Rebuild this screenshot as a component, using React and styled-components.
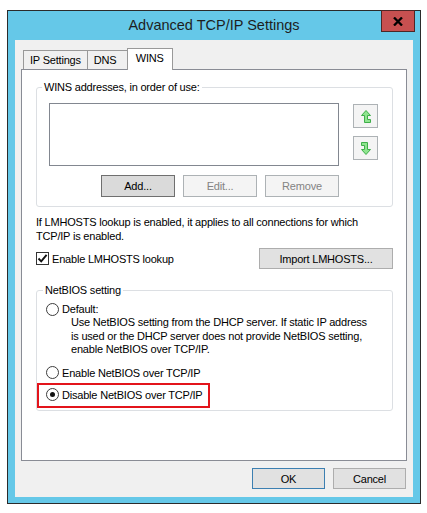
import React from 'react';
import styled, { createGlobalStyle, css } from 'styled-components';

const GlobalStyle = createGlobalStyle`
  html, body {
    margin: 0;
    padding: 0;
    background: #fff;
  }
  body {
    font: 11px 'Liberation Sans', Arial, sans-serif;
    letter-spacing: -0.2px;
    color: #000;
  }
`;

const Page = styled.div`
  padding: 10px 0 0 7px;
`;

const Window = styled.div`
  box-sizing: border-box;
  width: 414px;
  height: 494px;
  border: 1px solid #2b2b2b;
  background: #65c8e8;
  display: flex;
  flex-direction: column;
`;

const TitleBar = styled.div`
  height: 29px;
  flex: none;
  display: grid;
  grid-template-columns: 1fr auto 1fr;
  align-items: start;
`;

const Title = styled.div`
  grid-column: 2;
  font-size: 14.5px;
  letter-spacing: 0;
  line-height: 29px;
  color: #1e1e1e;
  white-space: nowrap;
`;

const CloseButton = styled.div`
  grid-column: 3;
  justify-self: end;
  box-sizing: border-box;
  width: 34px;
  height: 22px;
  margin: -1px 5px 0 0;
  background: #c75050;
  border: 1px solid #4d2626;
  display: flex;
  align-items: center;
  justify-content: center;
`;

const Client = styled.div`
  flex: 1;
  box-sizing: border-box;
  margin: 0 7px 6px;
  padding: 8px 6px;
  background: #f0f0f0;
  display: flex;
  flex-direction: column;
`;

const TabStrip = styled.div`
  display: flex;
  align-items: flex-end;
  height: 22px;
  padding-left: 2px;
  margin-bottom: -1px;
  position: relative;
  z-index: 1;
`;

const Tab = styled.div`
  box-sizing: border-box;
  min-width: ${(p) => (p.$active ? 46 : 41)}px;
  height: ${(p) => (p.$active ? 22 : 19)}px;
  margin: 0 0 ${(p) => (p.$active ? 0 : 1)}px -1px;
  padding: 0 ${(p) => (p.$active ? 8 : 6)}px ${(p) => (p.$active ? 3 : 0)}px;
  line-height: 18px;
  border: 1px solid #999;
  border-bottom: none;
  background: ${(p) => (p.$active ? '#fff' : '#f0f0f0')};
  white-space: nowrap;

  &:first-child {
    margin-left: 0;
  }
`;

const Panel = styled.div`
  flex: 1;
  box-sizing: border-box;
  background: #fff;
  border: 1px solid #898c95;
  padding: 11px 13px 0 14px;
  display: flex;
  flex-direction: column;
`;

const Group = styled.fieldset`
  margin: ${(p) => p.$top || 0}px 0 0;
  padding: 0;
  min-width: 0;
  border: 1px solid #dcdfe3;
  border-radius: 3px;
`;

const Legend = styled.legend`
  margin-left: ${(p) => p.$indent || 5}px;
  padding: 0 2px;
  line-height: 13px;
`;

const AddressGrid = styled.div`
  display: grid;
  grid-template-columns: 290px 25px;
  column-gap: 14px;
  row-gap: 9px;
  padding: 9px 0 9px 12px;
`;

const ListBox = styled.div`
  box-sizing: border-box;
  height: 63px;
  border: 1px solid #828790;
  background: #fff;
`;

const ArrowColumn = styled.div`
  display: flex;
  flex-direction: column;
  gap: 8px;
  padding-top: 1px;
`;

const ButtonRow = styled.div`
  display: flex;
  justify-content: flex-end;
  gap: 8px;
`;

const Button = styled.div`
  box-sizing: border-box;
  width: ${(p) => p.$w || 73}px;
  height: ${(p) => p.$h || 21}px;
  display: flex;
  align-items: center;
  justify-content: center;
  background: #e1e1e1;
  border: 1px solid #adadad;
  color: #000;

  ${(p) =>
    p.$variant === 'focus' &&
    css`
      background: #dadada;
      border-color: #6f6f6f;
    `}
  ${(p) =>
    p.$variant === 'default' &&
    css`
      border-color: #3c7fb1;
    `}
  ${(p) =>
    p.$variant === 'disabled' &&
    css`
      background: #f4f4f4;
      border-color: #adb2b5;
      color: #838383;
    `}
`;

const Note = styled.p`
  margin: 8px 0 0;
  line-height: 14px;
`;

const LookupRow = styled.div`
  margin-top: 5px;
  height: 21px;
  display: flex;
  align-items: center;
  justify-content: space-between;
`;

const CheckLabel = styled.div`
  display: flex;
  align-items: center;
  gap: 3px;
`;

const CheckBox = styled.div`
  box-sizing: border-box;
  width: 13px;
  height: 13px;
  border: 1px solid #333;
  background: #fff;
  display: flex;
  align-items: center;
  justify-content: center;
`;

const RadioList = styled.div`
  padding: 5px 0 8px 9px;
  display: flex;
  flex-direction: column;
  align-items: flex-start;
`;

const RadioRow = styled.div`
  display: flex;
  align-items: center;
  gap: 3px;
  height: 14px;
  margin-top: ${(p) => p.$gap || 0}px;

  ${(p) =>
    p.$highlight &&
    css`
      border: 2px solid #e3141b;
      padding: 3px 5px 4px 7px;
      margin: ${(p.$gap || 0) - 5}px 0 -6px -9px;
    `}
`;

const Radio = styled.div`
  box-sizing: border-box;
  width: 13px;
  height: 13px;
  border: 1px solid #3d3d3d;
  border-radius: 50%;
  background: #fff;
  display: flex;
  align-items: center;
  justify-content: center;

  &::after {
    content: '';
    display: ${(p) => (p.$checked ? 'block' : 'none')};
    width: 5px;
    height: 5px;
    border-radius: 50%;
    background: #111;
  }
`;

const RadioNote = styled.div`
  padding-left: 25px;
  line-height: 13.5px;
`;

const Footer = styled.div`
  display: flex;
  justify-content: flex-end;
  gap: 8px;
  margin-top: 7px;
  padding-right: 1px;
`;

const ArrowIcon = ({ down }) => (
  <svg width="10" height="13" viewBox="0 0 10 13">
    <path
      d={
        down
          ? 'M0.5 0.5H6.5V7.5H9.5L5 12.5L0.5 7.5H3.5V3.5H0.5Z'
          : 'M5 0.5L9.5 5.5H6.5V9.5H9.5V12.5H3.5V5.5H0.5Z'
      }
      fill="#8fe58f"
      stroke="#3fae4a"
      strokeWidth="1"
      strokeLinejoin="miter"
    />
  </svg>
);

const App = () => (
  <Page>
    <GlobalStyle />
    <Window>
      <TitleBar>
        <Title>Advanced TCP/IP Settings</Title>
        <CloseButton>
          <svg width="10" height="9" viewBox="0 0 10 9">
            <path d="M1 0.5L9 8.5M9 0.5L1 8.5" stroke="#000" strokeWidth="2.3" />
          </svg>
        </CloseButton>
      </TitleBar>
      <Client>
        <TabStrip>
          <Tab>IP Settings</Tab>
          <Tab>DNS</Tab>
          <Tab $active>WINS</Tab>
        </TabStrip>
        <Panel>
          <Group>
            <Legend>WINS addresses, in order of use:</Legend>
            <AddressGrid>
              <ListBox />
              <ArrowColumn>
                <Button $w={25} $h={24} $variant="disabled">
                  <ArrowIcon />
                </Button>
                <Button $w={25} $h={24} $variant="disabled">
                  <ArrowIcon down />
                </Button>
              </ArrowColumn>
              <ButtonRow>
                <Button $w={74} $h={22} $variant="focus">Add...</Button>
                <Button $w={74} $h={22} $variant="disabled">Edit...</Button>
                <Button $w={74} $h={22} $variant="disabled">Remove</Button>
              </ButtonRow>
            </AddressGrid>
          </Group>
          <Note>
            If LMHOSTS lookup is enabled, it applies to all connections for which
            <br />
            TCP/IP is enabled.
          </Note>
          <LookupRow>
            <CheckLabel>
              <CheckBox>
                <svg width="11" height="11" viewBox="0 0 11 11">
                  <path d="M1.5 5.5L4.2 8.3L9.6 1.8" fill="none" stroke="#111" strokeWidth="1.9" />
                </svg>
              </CheckBox>
              Enable LMHOSTS lookup
            </CheckLabel>
            <Button $w={134}>Import LMHOSTS...</Button>
          </LookupRow>
          <Group $top={15}>
            <Legend $indent={6}>NetBIOS setting</Legend>
            <RadioList>
              <RadioRow>
                <Radio />
                Default:
              </RadioRow>
              <RadioNote>
                Use NetBIOS setting from the DHCP server. If static IP address
                <br />
                is used or the DHCP server does not provide NetBIOS setting,
                <br />
                enable NetBIOS over TCP/IP.
              </RadioNote>
              <RadioRow $gap={9}>
                <Radio />
                Enable NetBIOS over TCP/IP
              </RadioRow>
              <RadioRow $gap={8} $highlight>
                <Radio $checked />
                Disable NetBIOS over TCP/IP
              </RadioRow>
            </RadioList>
          </Group>
        </Panel>
        <Footer>
          <Button $variant="default">OK</Button>
          <Button>Cancel</Button>
        </Footer>
      </Client>
    </Window>
  </Page>
);

export default App;
